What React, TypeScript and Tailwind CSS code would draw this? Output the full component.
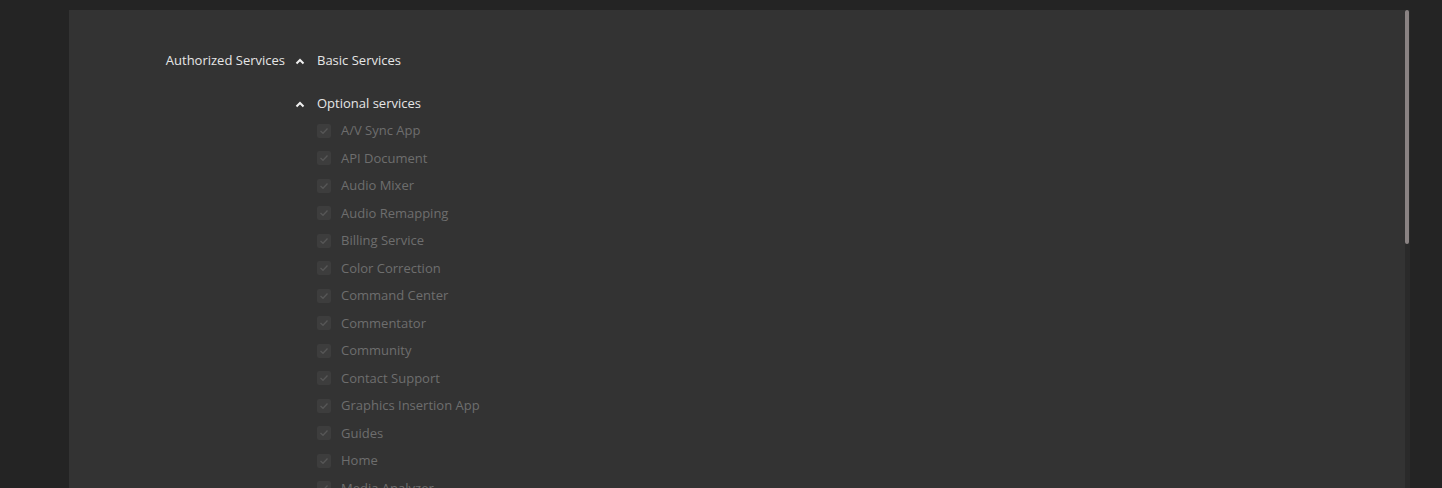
import React from "react";

const services = [
  "A/V Sync App",
  "API Document",
  "Audio Mixer",
  "Audio Remapping",
  "Billing Service",
  "Color Correction",
  "Command Center",
  "Commentator",
  "Community",
  "Contact Support",
  "Graphics Insertion App",
  "Guides",
  "Home",
  "Media Analyzer",
  "Media Player",
];

function Chevron() {
  return (
    <svg width="10" height="7" viewBox="0 0 10 7" className="block">
      <path d="M1.5 5.5 L5 2 L8.5 5.5" fill="none" stroke="#f0f0f0" strokeWidth="2" />
    </svg>
  );
}

function CheckBox() {
  return (
    <span className="flex h-[14px] w-[14px] shrink-0 items-center justify-center rounded-[2px] bg-[#3d3d3d]">
      <svg width="10" height="8" viewBox="0 0 10 8">
        <path d="M1.5 4 L4 6.3 L8.5 1.5" fill="none" stroke="#575757" strokeWidth="1.3" />
      </svg>
    </span>
  );
}

export default function App() {
  return (
    <div
      className="h-[488px] overflow-hidden bg-[#242424] pl-[69px] pt-[10px]"
      style={{ fontFamily: "'Open Sans', 'Noto Sans', sans-serif" }}
    >
      <div className="relative flex h-[520px] w-[1341px] bg-[#333333]">
        {/* label column */}
        <div className="w-[216px] shrink-0 pt-[40px] text-right text-[13px] leading-[20px] text-[#e6e6e6]">
          Authorized Services
        </div>

        <div className="flex flex-col pt-[41px] pl-[10px]">
          <div className="flex h-[20px] items-center gap-[12px]">
            <Chevron />
            <span className="text-[13px] text-[#e6e6e6]">Basic Services</span>
          </div>

          <div className="mt-[23px] flex h-[20px] items-center gap-[12px]">
            <Chevron />
            <span className="text-[13px] text-[#e6e6e6]">Optional services</span>
          </div>

          <div className="ml-[22px] mt-[3px] flex flex-col">
            {services.map((name) => (
              <div key={name} className="flex h-[27.5px] items-center gap-[10px]">
                <CheckBox />
                <span className="text-[13px] text-[#6e6e6e]">{name}</span>
              </div>
            ))}
          </div>
        </div>

        {/* scrollbar */}
        <div className="absolute right-0 top-0 h-full w-[5px] bg-[#2a2a2a]">
          <div className="h-[234px] w-[4px] rounded-[2px] bg-[#8a8383]" />
        </div>
      </div>
    </div>
  );
}
